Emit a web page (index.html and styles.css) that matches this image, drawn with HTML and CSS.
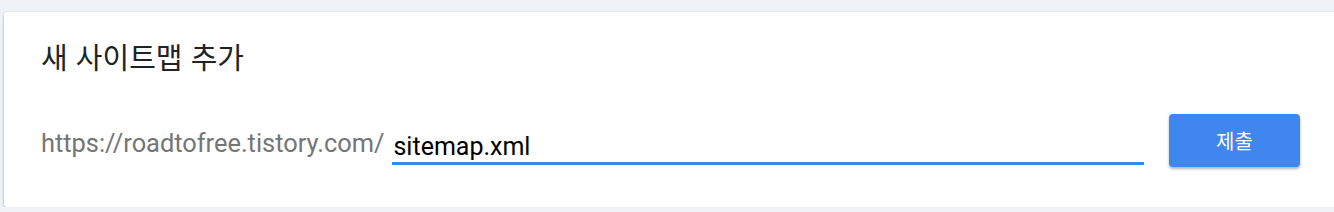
FILE: index.html
```html
<!DOCTYPE html>
<html lang="ko">

<head>
    <meta charset="UTF-8">
    <meta name="viewport" content="width=device-width, initial-scale=1.0">
    <title>새 사이트맵 추가</title>
    <link rel="stylesheet" href="styles.css">
</head>

<body>
    <div class="card">
        <h2 class="card-title">새 사이트맵 추가</h2>
        <form class="sitemap-form" onsubmit="return false">
            <span class="prefix">https://roadtofree.tistory.com/</span>
            <input class="sitemap-input" type="text" value="sitemap.xml">
            <button class="submit-button" type="submit">제출</button>
        </form>
    </div>
</body>

</html>
```

FILE: styles.css
```css
body {
    margin: 0;
    background-color: #eff2f7;
    font-family: Roboto, "Noto Sans CJK KR", sans-serif;
    overflow: hidden;
}

.card {
    margin: 12px -10px 0 4px;
    height: 195px;
    box-sizing: border-box;
    padding: 24px 0 0 37px;
    background-color: #fff;
    border-radius: 3px;
    box-shadow: 0 1px 3px rgba(0, 0, 0, 0.3);
}

.card-title {
    margin: 0;
    font-family: "Noto Sans CJK KR", sans-serif;
    font-size: 29px;
    font-weight: 400;
    line-height: 40px;
    color: #222;
}

.sitemap-form {
    display: flex;
    align-items: flex-end;
    margin-top: 38px;
    width: 1259px;
    height: 53px;
}

.prefix {
    font-size: 25.4px;
    line-height: 29px;
    color: #757575;
    margin-right: 8px;
    margin-bottom: 9px;
    white-space: nowrap;
}

.sitemap-input {
    flex: 1;
    min-width: 0;
    font-family: Roboto, sans-serif;
    font-size: 25px;
    line-height: 29px;
    height: 33px;
    box-sizing: border-box;
    color: #000;
    border: none;
    border-bottom: 3px solid #3f86ee;
    padding: 0 0 1px 1px;
    margin: 0 0 2px 0;
    outline: none;
}

.submit-button {
    margin-left: 25px;
    width: 131px;
    height: 53px;
    flex-shrink: 0;
    border: none;
    border-radius: 4px;
    background-color: #3f86ee;
    color: #fff;
    font-family: "Noto Sans CJK KR", sans-serif;
    font-size: 20px;
    box-shadow: 0 2px 3px rgba(0, 0, 0, 0.3);
    cursor: pointer;
}
```
